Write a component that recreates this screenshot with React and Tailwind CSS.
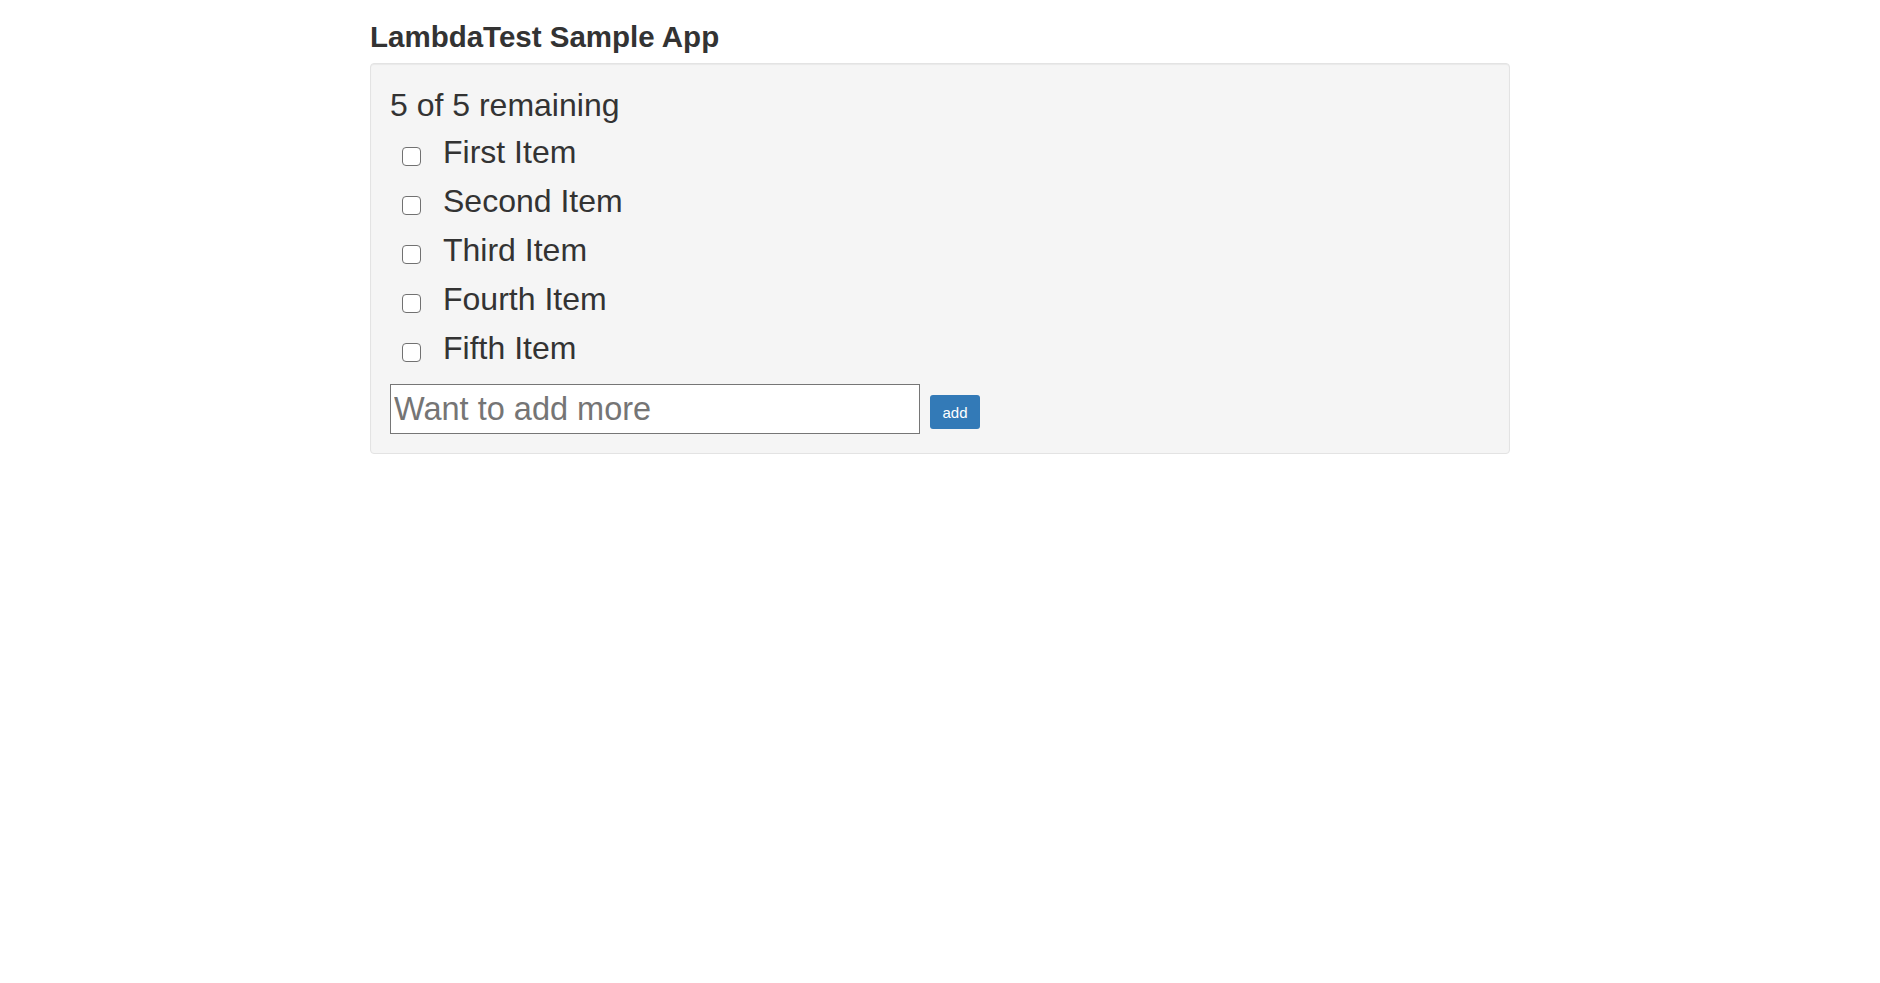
import React from "react";

const items = ["First Item", "Second Item", "Third Item", "Fourth Item", "Fifth Item"];

export default function App() {
  return (
    <div className="min-h-screen bg-white text-[#333333] font-['Liberation_Sans',Arial,sans-serif]">
      <div className="w-[1140px] mx-auto">
        <h2 className="mt-[20px] mb-[10px] text-[29.5px] leading-[33px] font-bold">LambdaTest Sample App</h2>
        <div className="bg-[#f5f5f5] border border-[#e3e3e3] rounded-[4px] p-[19px] shadow-[inset_0_1px_1px_rgba(0,0,0,0.05)]">
          <div className="text-[32px] leading-[45px]">5 of 5 remaining</div>
          <ul>
            {items.map((t) => (
              <li key={t} className="flex items-start h-[49px]">
                <input
                  type="checkbox"
                  className="appearance-none ml-[12px] mt-[19px] w-[19px] h-[19px] border border-[#717171] rounded-[4px] bg-white shrink-0"
                />
                <span className="ml-[22px] text-[32px] leading-[49px]">{t}</span>
              </li>
            ))}
          </ul>
          <div className="flex items-start mt-[11px]">
            <input
              type="text"
              placeholder="Want to add more"
              className="w-[530px] h-[50px] border border-[#767676] bg-white px-[3px] text-[32.5px] text-[#333333] placeholder:text-[#757575] outline-none"
            />
            <button className="ml-[10px] mt-[11px] w-[50px] h-[34px] bg-[#337ab7] rounded-[3px] text-white text-[15px] leading-none flex items-center justify-center">
              add
            </button>
          </div>
        </div>
      </div>
    </div>
  );
}
